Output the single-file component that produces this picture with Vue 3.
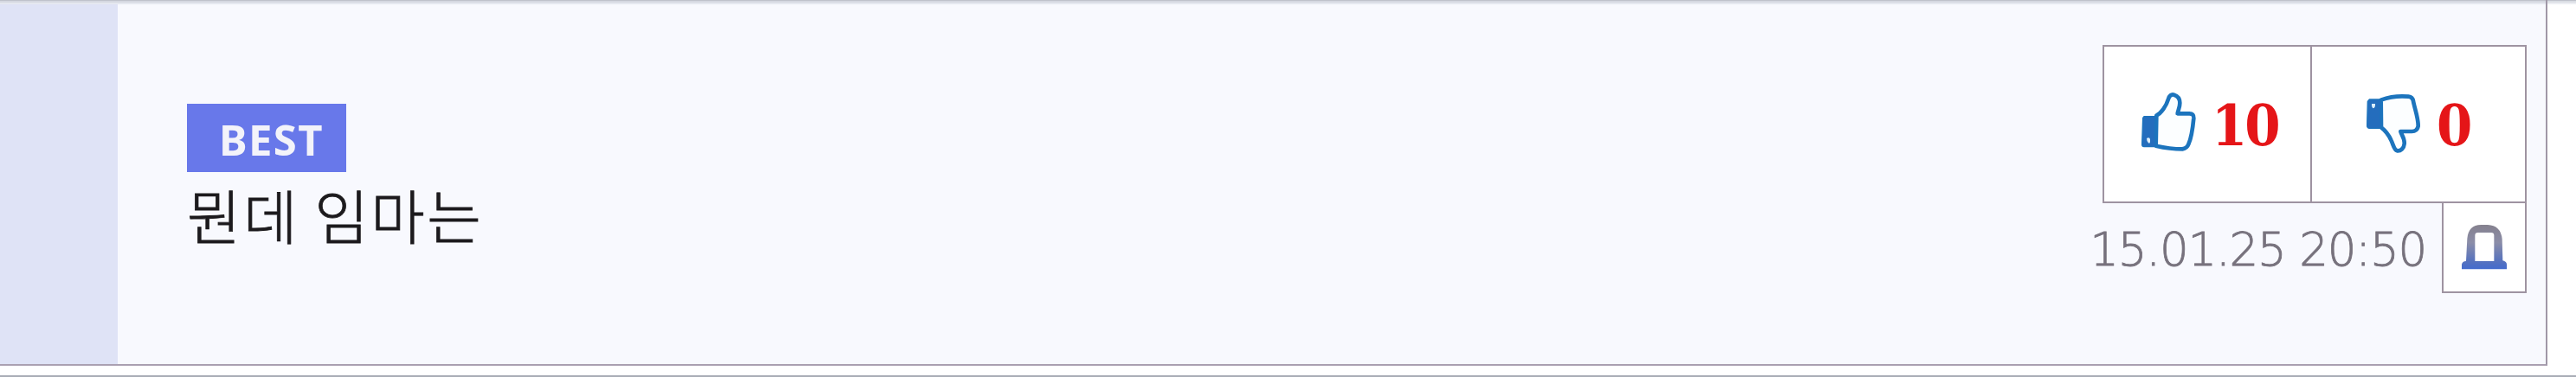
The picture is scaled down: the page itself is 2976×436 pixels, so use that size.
<script setup>
  import { ref } from 'vue';

  // The comment shown in this row
  const comment = {
    badge: 'BEST',
    text: '뭔데 임마는',
    date: '15.01.25 20:50',
  };

  // Vote counters, increased when a button is pressed
  const likes = ref(10);
  const dislikes = ref(0);
</script>

<template>
  <div class="page">
    <article class="comment">
      <div class="comment-side"></div>
      <div class="comment-body">
        <span class="badge">{{ comment.badge }}</span>
        <p class="comment-text">{{ comment.text }}</p>
      </div>
      <div class="comment-tools">
        <div class="votes">
          <button class="vote vote-up" aria-label="like" @click="likes++">
            <svg class="vote-icon" viewBox="0 0 210 222">
              <path class="hand" d="M58 89C74 81 92 56 99 32C102 21 109 14 119 17C132 21 139 32 139 45C139 60 134 67 131 82H172Q188 82 187 98C184 130 181 162 169 188Q164 202 148 205C119 205 87 201 56 194Z" />
              <path class="cuff" d="M15 92H55Q50 142 54 197H15Q7 197 8 187L11 97Z" />
              <path class="button-dot" d="M24 168q8-5 12 2v10q-1 7-6 4q-6-5-6-16z" />
            </svg>
            <span class="vote-count">{{ likes }}</span>
          </button>
          <button class="vote vote-down" aria-label="dislike" @click="dislikes++">
            <svg class="vote-icon" viewBox="0 0 210 222">
              <path class="hand" d="M56 35C86 24 119 20 151 23Q166 25 168 39C174 69 186 99 185 126Q181 144 163 144H124C126 154 139 168 137 187C136 202 124 213 112 211C101 208 99 190 91 174C83 156 71 141 57 130Z" />
              <path class="cuff" d="M16 33H56Q51 81 57 133H15Q7 132 8 121L10 40Z" />
              <path class="button-dot" d="M24 48h12q1 14-7 16q-6-4-5-16z" />
            </svg>
            <span class="vote-count">{{ dislikes }}</span>
          </button>
        </div>
        <div class="meta">
          <time class="date">{{ comment.date }}</time>
          <button class="report" aria-label="report">
            <svg class="report-icon" viewBox="0 0 156 156">
              <defs>
                <linearGradient id="siren" x1="0" y1="0" x2="0" y2="1">
                  <stop offset="0" stop-color="#85818e" />
                  <stop offset="0.4" stop-color="#8b8da8" />
                  <stop offset="0.8" stop-color="#5873bd" />
                  <stop offset="1" stop-color="#436bce" />
                </linearGradient>
              </defs>
              <path fill="url(#siren)" fill-rule="evenodd" d="M15 126L19 48Q23 0 67 0H90Q135 2 140 49L142 124Q156 128 156 137V154H0V137Q2 127 15 126ZM46 126H112V37Q112 27 102 27H56Q46 27 46 37Z" />
            </svg>
          </button>
        </div>
      </div>
    </article>
  </div>
</template>

<style>
  body {
    margin: 0;
    background: #fff;
  }
</style>

<style scoped>
  * {
    box-sizing: border-box;
  }

  .page {
    width: 2976px;
    height: 436px;
    overflow: hidden;
    background: linear-gradient(#bfc2cb 0 1px, #dadde4 1px 3px, #eceef3 3px 5px, #fff 5px);
    border-bottom: 2px solid #a9adb6;
  }

  .comment {
    display: flex;
    width: 2943px;
    height: 423px;
    border-right: 2px solid #a097a7;
    border-bottom: 2px solid #aaa0b1;
    background: linear-gradient(#bfc2cb 0 1px, #d5d8e1 1px 3px, #e5e8f0 3px 5px, #f8f9fe 5px);
  }

  .comment-side {
    width: 136px;
    margin-top: 5px;
    background: #dfe3f6;
  }

  .comment-body {
    flex: 1;
    padding: 120px 0 0 80px;
  }

  .badge {
    display: block;
    width: 184px;
    height: 79px;
    padding-left: 37px;
    background: #6878ea;
    color: #f3f3fa;
    font: bold 49px/83px "Noto Sans", sans-serif;
    letter-spacing: 1.4px;
  }

  .comment-text {
    margin: 0;
    color: #1c1a1d;
    font: 300 68px/97px "Noto Sans CJK KR", sans-serif;
    letter-spacing: 2.4px;
    white-space: nowrap;
    -webkit-text-stroke: 0.8px #1c1a1d;
  }

  .comment-tools {
    width: 540px;
    padding: 52px 22px 0 0;
  }

  .votes {
    display: flex;
    width: 490px;
    height: 183px;
    margin-left: auto;
    border: 2px solid #9e93a1;
    background: #fff;
  }

  .vote {
    display: flex;
    align-items: flex-start;
    padding: 50px 0 0 41px;
    border: none;
    background: none;
  }

  .vote-up {
    width: 240px;
    border-right: 2px solid #9e93a1;
  }

  .vote-down {
    flex: 1;
    padding-left: 61px;
  }

  .vote-icon {
    flex: none;
    width: 70px;
    height: 74px;
  }

  .hand {
    fill: #fcfeff;
    stroke: #1c74bd;
    stroke-width: 14;
    stroke-linejoin: round;
  }

  .cuff {
    fill: #246dbd;
    stroke: #1c74bd;
    stroke-width: 4;
    stroke-linejoin: round;
  }

  .button-dot {
    fill: #dceefa;
  }

  .vote-count {
    margin-left: 13px;
    color: #e51518;
    font: bold 66px/82px "DejaVu Serif Condensed", "DejaVu Serif", serif;
    letter-spacing: -3px;
  }

  .meta {
    display: flex;
    justify-content: flex-end;
    height: 104px;
  }

  .date {
    margin-right: 18px;
    color: #77727d;
    font: 200 53px/107px "DejaVu Sans", sans-serif;
    letter-spacing: -1.2px;
    white-space: nowrap;
    -webkit-text-stroke: 0.8px #77727d;
  }

  .report {
    display: flex;
    flex: none;
    align-items: flex-start;
    width: 98px;
    padding: 25px 0 0 21px;
    border: 2px solid #9e93a1;
    border-top: none;
    background: #fff;
  }

  .report-icon {
    display: block;
    width: 52px;
    height: 52px;
  }
</style>
